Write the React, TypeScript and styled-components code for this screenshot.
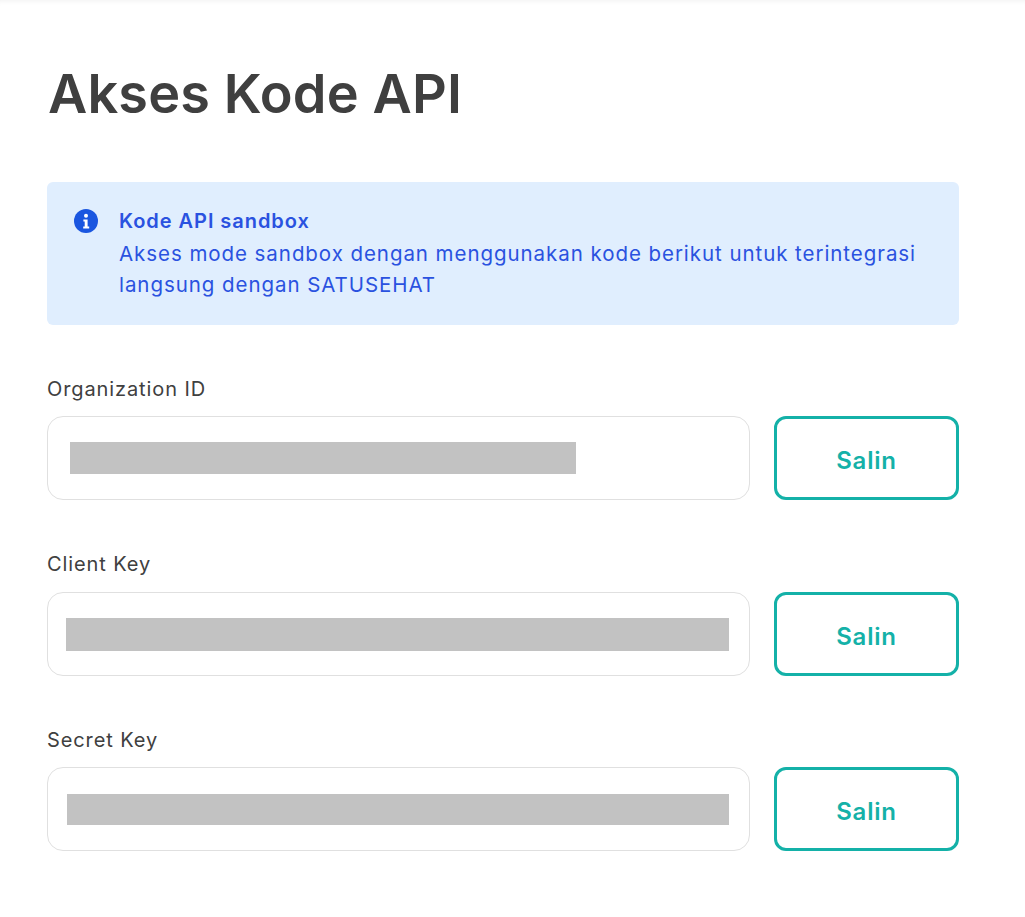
import React from 'react';
import styled, {createGlobalStyle} from 'styled-components';

const GlobalStyle = createGlobalStyle`
    html, body {
        margin: 0;
        padding: 0;
        background: #fff;
    }
    body {
        font-family: Inter, "Noto Sans", "Liberation Sans", sans-serif;
    }
`;

const Page = styled.div`
    height: 917px;
    box-sizing: border-box;
    padding: 0 66px 0 47px;
    box-shadow: inset 0 6px 6px -6px rgba(0, 0, 0, 0.08);
`;

const Title = styled.h1`
    margin: 0;
    padding: 58px 0 0 1px;
    height: 182px;
    box-sizing: border-box;
    font-size: 54px;
    line-height: 72px;
    font-weight: 600;
    letter-spacing: 0.15px;
    color: #3f3f3f;
`;

const Alert = styled.div`
    display: flex;
    gap: 21px;
    height: 143px;
    box-sizing: border-box;
    padding: 24px 27px;
    background: #e0eefe;
    border-radius: 6px;
    color: #2a52e0;
`;

const AlertIcon = styled.svg`
    flex: none;
    width: 24px;
    height: 24px;
    margin-top: 3px;
`;

const AlertBody = styled.div`
    font-size: 20.5px;
    line-height: 31.5px;
    letter-spacing: 0.94px;
`;

const AlertTitle = styled.div`
    font-weight: 600;
    font-size: 20px;
    letter-spacing: 0.95px;
`;

const Field = styled.div`
    margin-top: 50px;
`;

const Label = styled.div<{$gap: number}>`
    font-size: 20px;
    line-height: 28px;
    letter-spacing: 0.9px;
    color: #404040;
    margin-bottom: ${props => props.$gap}px;
`;

const Row = styled.div`
    display: flex;
    gap: 24px;
    height: 84px;
`;

const InputBox = styled.div<{$inset: number}>`
    flex: 1;
    display: flex;
    align-items: center;
    box-sizing: border-box;
    padding-left: ${props => props.$inset}px;
    border: 1px solid #e0e0e0;
    border-radius: 16px;
`;

const Redacted = styled.div<{$width: number; $height: number}>`
    width: ${props => props.$width}px;
    height: ${props => props.$height}px;
    background: #c2c2c2;
`;

const CopyButton = styled.button`
    flex: none;
    width: 185px;
    padding: 5px 0 0;
    border: 3px solid #14b1a8;
    border-radius: 12px;
    background: #fff;
    color: #14b1a8;
    font-family: inherit;
    font-size: 24px;
    font-weight: 600;
    letter-spacing: 0.8px;
    cursor: pointer;
`;

const fields = [
    {label: 'Organization ID', inset: 22, width: 506, height: 32, gap: 13},
    {label: 'Client Key', inset: 18, width: 663, height: 33, gap: 14},
    {label: 'Secret Key', inset: 19, width: 662, height: 31, gap: 13},
];

const InfoIcon = () => (
    <AlertIcon viewBox='0 0 24 24'>
        <circle cx='12' cy='12' r='12' fill='#1a56e0'/>
        <circle cx='12' cy='6.8' r='2' fill='#fff'/>
        <path d='M9.4 10.4h4.2v7h1.6v2.2H9.2v-2.2h1.5v-4.8H9.4z' fill='#fff'/>
    </AlertIcon>
);

const App = () => (
    <Page>
        <GlobalStyle/>
        <Title>Akses Kode API</Title>
        <Alert>
            <InfoIcon/>
            <AlertBody>
                <AlertTitle>Kode API sandbox</AlertTitle>
                Akses mode sandbox dengan menggunakan kode berikut untuk terintegrasi langsung dengan SATUSEHAT
            </AlertBody>
        </Alert>
        {fields.map(field => (
            <Field key={field.label}>
                <Label $gap={field.gap}>{field.label}</Label>
                <Row>
                    <InputBox $inset={field.inset}>
                        <Redacted $width={field.width} $height={field.height}/>
                    </InputBox>
                    <CopyButton>Salin</CopyButton>
                </Row>
            </Field>
        ))}
    </Page>
);

export default App;
